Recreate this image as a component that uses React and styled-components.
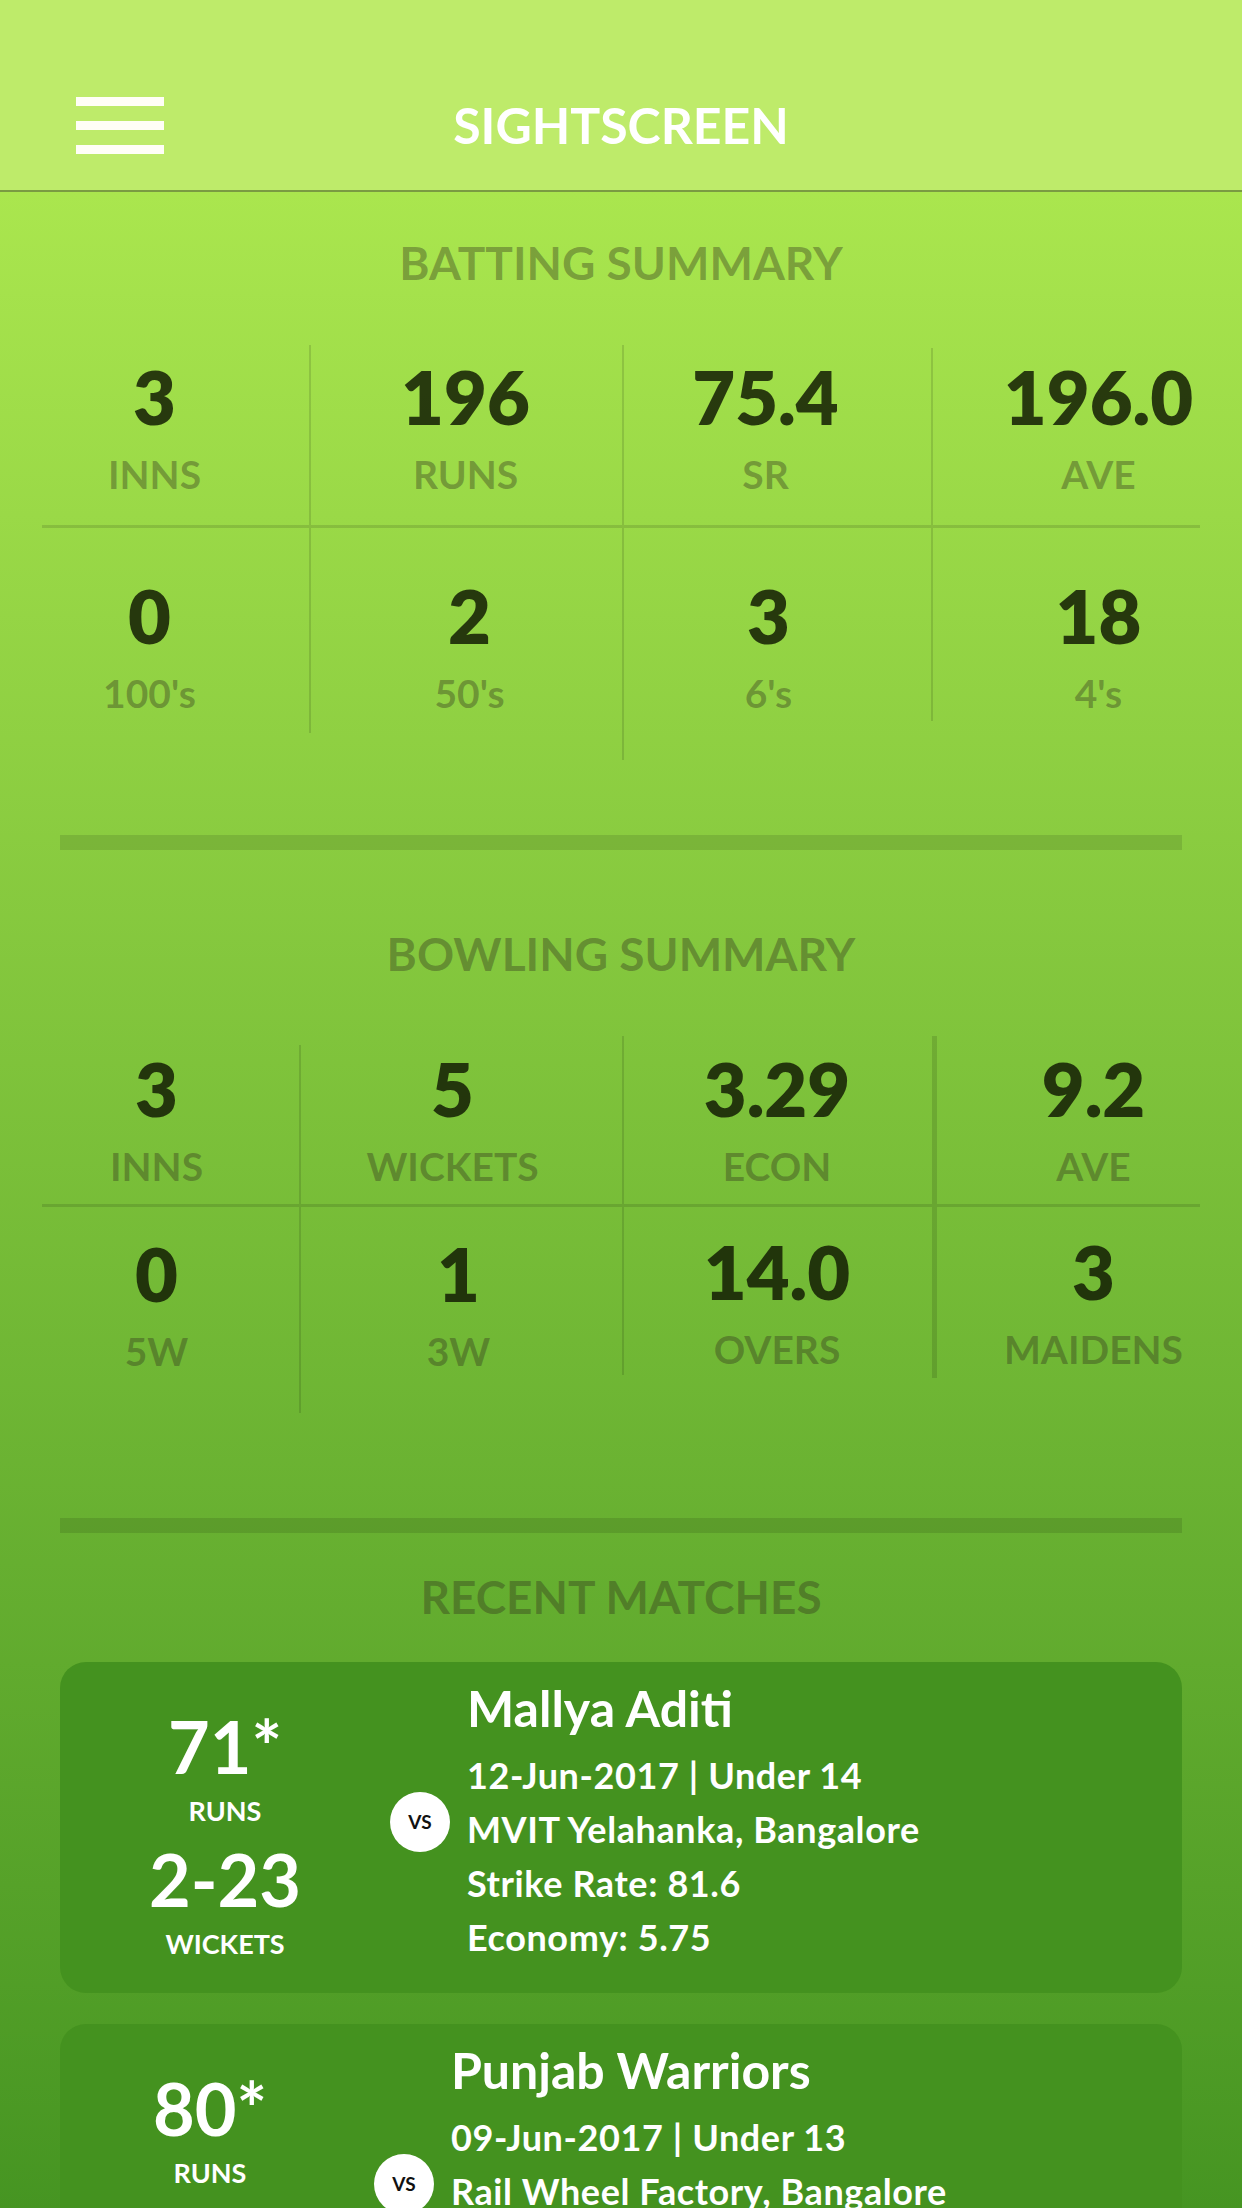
import React from 'react';
import styled, { createGlobalStyle } from 'styled-components';

const Global = createGlobalStyle`
  html, body { margin: 0; padding: 0; }
  body { font-family: Lato, "Open Sans", "Liberation Sans", sans-serif; }
  * { box-sizing: border-box; }
`;

const Screen = styled.div`
  width: 1242px;
  height: 2208px;
  overflow: hidden;
  display: flex;
  flex-direction: column;
  background: linear-gradient(180deg, #aae64e 192px, #469522 100%);
`;

const Header = styled.header`
  flex-shrink: 0;
  height: 192px;
  padding-top: 60px;
  background: #beeb6a;
  border-bottom: 2px solid #7a9b42;
  display: grid;
  grid-template-columns: 1fr auto 1fr;
  align-items: center;
`;

const MenuButton = styled.div`
  justify-self: start;
  margin-left: 76px;
  width: 88px;
  display: flex;
  flex-direction: column;
  gap: 15px;
`;

const MenuBar = styled.span`
  display: block;
  height: 9px;
  background: #fffef6;
`;

const AppTitle = styled.h1`
  margin: 0;
  font-size: 50px;
  line-height: 50px;
  font-weight: 700;
  color: #ffffff;
`;

const SectionTitle = styled.h2`
  flex-shrink: 0;
  margin: ${p => p.$mt}px 0 0;
  font-size: 46px;
  line-height: 60px;
  font-weight: 700;
  text-align: center;
  color: rgba(50, 50, 30, 0.39);
`;

const StatGrid = styled.div`
  flex-shrink: 0;
  margin: ${p => p.$mt}px 42px 0;
  display: grid;
  grid-template-columns: ${p => p.$cols};
`;

const StatCell = styled.div`
  display: flex;
  flex-direction: column;
  align-items: center;
  text-align: center;
  align-self: ${p => (p.$row === 'top' ? 'end' : 'start')};
  padding-top: ${p => p.$pt}px;
  padding-bottom: ${p => p.$pb}px;
  padding-left: ${p => Math.max(0, 2 * p.$shift)}px;
  padding-right: ${p => Math.max(0, -2 * p.$shift)}px;
  border-left: ${p => (p.$first ? 'none' : `${p.$rule}px solid rgba(0, 0, 0, 0.12)`)};
  border-bottom: ${p => (p.$row === 'top' ? '3px solid rgba(0, 0, 0, 0.12)' : 'none')};
`;

const StatValue = styled.div`
  font-size: 74px;
  line-height: 74px;
  font-weight: 800;
  color: rgba(20, 30, 5, 0.86);
  white-space: nowrap;
`;

const StatLabel = styled.div`
  margin-top: 21px;
  font-size: 39px;
  line-height: 38px;
  font-weight: 700;
  color: rgba(50, 50, 30, 0.39);
  white-space: nowrap;
`;

const Rule = styled.div`
  flex-shrink: 0;
  margin: ${p => p.$mt}px 60px 0;
  height: 15px;
  background: rgba(0, 0, 0, 0.11);
`;

const MatchCard = styled.div`
  flex-shrink: 0;
  margin: ${p => p.$mt}px 60px 0;
  padding: 17px 0 29px;
  border-radius: 26px;
  background: #44921f;
  display: grid;
  grid-template-columns: ${p => p.$scoreWidth}px 60px 1fr;
  align-items: center;
`;

const ScoreBlock = styled.div`
  display: flex;
  flex-direction: column;
  align-items: center;
  padding-right: ${p => p.$pad}px;
  margin-top: 25px;
  color: #ffffff;
`;

const ScoreLabel = styled.div`
  margin-top: 18px;
  font-size: 27px;
  line-height: 26px;
  font-weight: 700;
`;

const ScoreValue = styled.div`
  font-size: 72px;
  line-height: 68px;
  font-weight: 700;
  ${ScoreLabel} + & {
    margin-top: 21px;
  }
`;

const VsBadge = styled.div`
  width: 60px;
  height: 60px;
  border-radius: 50%;
  background: #ffffff;
  color: #111111;
  display: flex;
  align-items: center;
  justify-content: center;
  font-size: 19px;
  font-weight: 700;
`;

const Details = styled.div`
  padding-left: 17px;
  color: #ffffff;
  display: flex;
  flex-direction: column;
`;

const Opponent = styled.div`
  font-size: 50px;
  line-height: 58px;
  font-weight: 700;
  margin-bottom: 11px;
  white-space: nowrap;
`;

const DetailLine = styled.div`
  font-size: 36px;
  line-height: 54px;
  font-weight: 700;
  letter-spacing: 0.6px;
  white-space: nowrap;
`;

const batting = {
  cols: '267px 313px 309px 269px',
  cells: [
    { row: 'top', v: '3', l: 'INNS', shift: -21, pt: 15, pb: 32 },
    { row: 'top', v: '196', l: 'RUNS', shift: -1, pt: 15, pb: 32 },
    { row: 'top', v: '75.4', l: 'SR', shift: -12, pt: 15, pb: 32 },
    { row: 'top', v: '196.0', l: 'AVE', shift: 32, pt: 12, pb: 32 },
    { row: 'bottom', v: '0', l: "100's", shift: -26, pt: 51, pb: 20 },
    { row: 'bottom', v: '2', l: "50's", shift: 3, pt: 51, pb: 21 },
    { row: 'bottom', v: '3', l: "6's", shift: -9, pt: 51, pb: 48 },
    { row: 'bottom', v: '18', l: "4's", shift: 32, pt: 51, pb: 9 },
  ],
  rules: [2, 2, 2, 2],
};

const bowling = {
  cols: '257px 323px 310px 268px',
  cells: [
    { row: 'top', v: '3', l: 'INNS', shift: -14, pt: 16, pb: 19 },
    { row: 'top', v: '5', l: 'WICKETS', shift: -9, pt: 7, pb: 19 },
    { row: 'top', v: '3.29', l: 'ECON', shift: -1, pt: 16, pb: 19 },
    { row: 'top', v: '9.2', l: 'AVE', shift: 25, pt: 16, pb: 19 },
    { row: 'bottom', v: '0', l: '5W', shift: -14, pt: 30, pb: 18 },
    { row: 'bottom', v: '1', l: '3W', shift: -3, pt: 30, pb: 43 },
    { row: 'bottom', v: '14.0', l: 'OVERS', shift: -1, pt: 28, pb: 7 },
    { row: 'bottom', v: '3', l: 'MAIDENS', shift: 25, pt: 28, pb: 10 },
  ],
  rules: [2, 2, 2, 5],
};

const matches = [
  {
    runs: '71*',
    wickets: '2-23',
    opponent: 'Mallya Aditi',
    date: '12-Jun-2017',
    group: 'Under 14',
    venue: 'MVIT Yelahanka, Bangalore',
    sr: '81.6',
    econ: '5.75',
    scoreWidth: 330,
    pad: 0,
    mt: 35,
  },
  {
    runs: '80*',
    wickets: '1-19',
    opponent: 'Punjab Warriors',
    date: '09-Jun-2017',
    group: 'Under 13',
    venue: 'Rail Wheel Factory, Bangalore',
    sr: '88.9',
    econ: '4.75',
    scoreWidth: 314,
    pad: 14,
    mt: 31,
  },
];

function Stats({ data, mt }) {
  return (
    <StatGrid $cols={data.cols} $mt={mt}>
      {data.cells.map((c, i) => (
        <StatCell
          key={i}
          $row={c.row}
          $first={i % 4 === 0}
          $rule={data.rules[i % 4]}
          $shift={c.shift}
          $pt={c.pt}
          $pb={c.pb}
        >
          <StatValue>{c.v}</StatValue>
          <StatLabel>{c.l}</StatLabel>
        </StatCell>
      ))}
    </StatGrid>
  );
}

export default function App() {
  return (
    <>
      <Global />
      <Screen>
        <Header>
          <MenuButton>
            <MenuBar />
            <MenuBar />
            <MenuBar />
          </MenuButton>
          <AppTitle>SIGHTSCREEN</AppTitle>
          <span />
        </Header>

        <SectionTitle $mt={41}>BATTING SUMMARY</SectionTitle>
        <Stats data={batting} mt={52} />
        <Rule $mt={75} />

        <SectionTitle $mt={74}>BOWLING SUMMARY</SectionTitle>
        <Stats data={bowling} mt={52} />
        <Rule $mt={105} />

        <SectionTitle $mt={34}>RECENT MATCHES</SectionTitle>
        {matches.map((m, i) => (
          <MatchCard key={i} $mt={m.mt} $scoreWidth={m.scoreWidth}>
            <ScoreBlock $pad={m.pad}>
              <ScoreValue>{m.runs}</ScoreValue>
              <ScoreLabel>RUNS</ScoreLabel>
              <ScoreValue>{m.wickets}</ScoreValue>
              <ScoreLabel>WICKETS</ScoreLabel>
            </ScoreBlock>
            <VsBadge>VS</VsBadge>
            <Details>
              <Opponent>{m.opponent}</Opponent>
              <DetailLine>
                {m.date} | {m.group}
              </DetailLine>
              <DetailLine>{m.venue}</DetailLine>
              <DetailLine>Strike Rate: {m.sr}</DetailLine>
              <DetailLine>Economy: {m.econ}</DetailLine>
            </Details>
          </MatchCard>
        ))}
      </Screen>
    </>
  );
}
